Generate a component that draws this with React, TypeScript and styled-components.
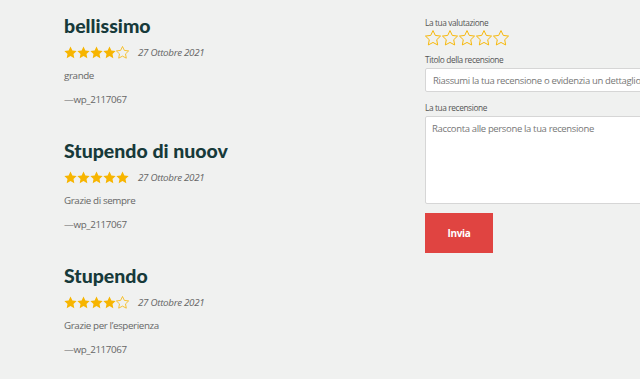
import React from "react"
import styled, { createGlobalStyle } from "styled-components"

const Global = createGlobalStyle`
    html, body {
        margin: 0;
        background: #f0f1f0;
        overflow: hidden;
    }
    body {
        font-family: "Open Sans", "Liberation Sans", sans-serif;
    }
`

const Page = styled.div`
    display: flex;
    padding: 14px 0 0 64px;
    width: 800px;
    height: 379px;
    box-sizing: border-box;
`

const Reviews = styled.div`
    width: 361px;
    flex-shrink: 0;
`

const Review = styled.div`
    height: 125px;
`

const Title = styled.h2`
    margin: 0;
    font-family: "Lato", sans-serif;
    font-weight: 900;
    font-size: 19.5px;
    line-height: 24px;
    color: #173a3a;
`

const Meta = styled.div`
    display: flex;
    align-items: center;
    margin-top: 6px;
    height: 16px;
`

const Stars = styled.div<{ gap: number }>`
    display: flex;
    gap: ${(p) => p.gap}px;
`

const Date = styled.span`
    margin-left: 9px;
    font-style: italic;
    font-size: 9.8px;
    letter-spacing: -0.3px;
    color: #666;
`

const Text = styled.p`
    margin: 9px 0 0;
    font-size: 9.8px;
    letter-spacing: -0.38px;
    line-height: 14px;
    color: #666;
`

const Author = styled(Text)`
    margin-top: 10px;
`

const Form = styled.form`
    width: 300px;
    flex-shrink: 0;
    padding-top: 3px;
`

const Label = styled.label`
    display: block;
    font-size: 8.3px;
    letter-spacing: -0.38px;
    line-height: 12px;
    color: #555;
`

const Input = styled.input`
    display: block;
    box-sizing: border-box;
    width: 100%;
    height: 24px;
    margin: 2px 0 10px;
    padding: 0 7px;
    border: 1px solid #d6d6d6;
    border-radius: 2px;
    background: #fff;
    font-family: inherit;
    font-size: 9.5px;
    letter-spacing: -0.35px;
    color: #555;
    &::placeholder { color: #777; }
`

const Area = styled.textarea`
    display: block;
    box-sizing: border-box;
    width: 100%;
    height: 88px;
    margin: 2px 0 9px;
    padding: 5px 6px;
    border: 1px solid #d6d6d6;
    border-radius: 2px;
    background: #fff;
    font-family: inherit;
    font-size: 9.5px;
    letter-spacing: -0.35px;
    resize: none;
    &::placeholder { color: #777; }
`

const Button = styled.button`
    width: 68px;
    height: 40px;
    border: none;
    background: #e04441;
    color: #fff;
    font-family: inherit;
    font-weight: 700;
    font-size: 10px;
    letter-spacing: -0.3px;
    cursor: pointer;
`

const STAR = "M12 1.8l3.1 6.5 7.1.9-5.2 4.9 1.3 7.1L12 17.8l-6.3 3.4 1.3-7.1L1.8 9.2l7.1-.9z"

const Star = ({ filled, size }: { filled: boolean; size: number }) => (
    <svg width={size} height={size} viewBox="1.2 1 21.6 21.6">
        <path
            d={STAR}
            fill={filled ? "#f7b500" : "none"}
            stroke="#f7b500"
            strokeWidth={filled ? 0 : 1.3}
            strokeLinejoin="round"
        />
    </svg>
)

const reviews = [
    { title: "bellissimo", rating: 4, text: "grande" },
    { title: "Stupendo di nuoov", rating: 5, text: "Grazie di sempre" },
    { title: "Stupendo", rating: 4, text: "Grazie per l’esperienza" },
]

const App = () => {
    return (
        <Page>
            <Global />
            <Reviews>
                {reviews.map((r) => (
                    <Review key={r.title}>
                        <Title>{r.title}</Title>
                        <Meta>
                            <Stars gap={0}>
                                {[1, 2, 3, 4, 5].map((i) => (
                                    <Star key={i} filled={i <= r.rating} size={13} />
                                ))}
                            </Stars>
                            <Date>27 Ottobre 2021</Date>
                        </Meta>
                        <Text>{r.text}</Text>
                        <Author>—wp_2117067</Author>
                    </Review>
                ))}
            </Reviews>
            <Form onSubmit={(e) => e.preventDefault()}>
                <Label>La tua valutazione</Label>
                <Stars gap={1} style={{ margin: "1px 0 8px" }}>
                    {[1, 2, 3, 4, 5].map((i) => (
                        <Star key={i} filled={false} size={16} />
                    ))}
                </Stars>
                <Label>Titolo della recensione</Label>
                <Input placeholder="Riassumi la tua recensione o evidenzia un dettaglio interessante" />
                <Label>La tua recensione</Label>
                <Area placeholder="Racconta alle persone la tua recensione" />
                <Button type="submit">Invia</Button>
            </Form>
        </Page>
    )
}

export default App
